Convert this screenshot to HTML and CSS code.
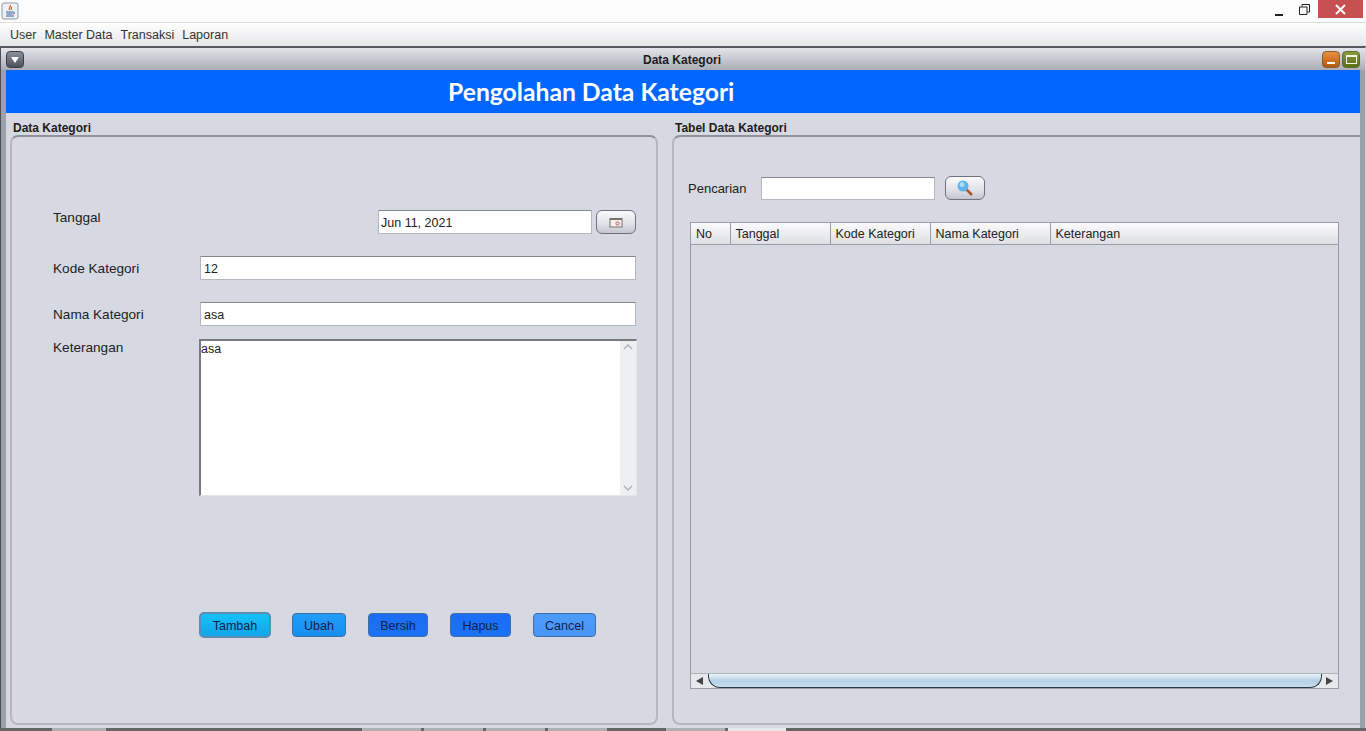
FILE: index.html
```html
<!DOCTYPE html>
<html>
<head>
  <title>Data Kategori</title>
  <meta charset="UTF-8">
  <link rel="stylesheet" href="styles.css">
</head>
<body>
  <!-- os window title -->
  <div class="os-title">
    <svg class="java-icon" width="18" height="18" viewBox="0 0 18 18">
      <rect x="1" y="1" width="16" height="16" rx="2" fill="#eef1f6" stroke="#8d97a6"/>
      <path d="M9 3c1.500 2-2 3-.5 5M10.500 5c.8 1.200-1 1.800-.2 3" fill="none" stroke="#d9541e" stroke-width="1.200"/>
      <path d="M5 10h7M5.500 12h6M5 14h8M12 10c2 0 2 2 0 2" fill="none" stroke="#2f5f96" stroke-width="1"/>
    </svg>
    <div class="os-controls">
      <svg class="os-min" width="10" height="10" viewBox="0 0 10 10"><rect x="1" y="7" width="8" height="2" fill="#222"/></svg>
      <svg class="os-restore" width="11" height="11" viewBox="0 0 11 11"><path d="M3 2.500V.5h7.500V8H8.500M.5 3h7.500v7.500H.5z" fill="none" stroke="#222"/></svg>
      <div class="os-close">
        <svg width="11" height="11" viewBox="0 0 11 11"><path d="M1 1l9 9M10 1l-9 9" stroke="#fff" stroke-width="2"/></svg>
      </div>
    </div>
  </div>

  <div class="menubar">
    <span class="menu-item">User</span>
    <span class="menu-item">Master Data</span>
    <span class="menu-item">Transaksi</span>
    <span class="menu-item">Laporan</span>
  </div>

  <!-- internal frame -->
  <div class="frame">
    <div class="frame-title">
      <div class="frame-btn btn-menu">
        <svg width="8" height="6" viewBox="0 0 8 6"><path d="M0 0h8L4 6z" fill="#fff"/></svg>
      </div>
      <div class="frame-name">Data Kategori</div>
      <div class="frame-btn btn-min"><span class="min-bar"></span></div>
      <div class="frame-btn btn-max"><span class="max-box"></span></div>
    </div>

    <div class="banner">Pengolahan Data Kategori</div>

    <div class="frame-body">
      <div class="group group-form">
        <div class="group-label">Data Kategori</div>
        <div class="group-box form-box">
          <div class="form-row row-date">
            <label class="lbl lbl-top">Tanggal</label>
            <div class="date-field">
              <input class="field date-input" type="text" value="Jun 11, 2021">
              <button class="gray-btn cal-btn">
                <svg width="14" height="11" viewBox="0 0 14 11">
                  <rect x="1" y="1.500" width="12" height="8.500" fill="#f4f1ea" stroke="#77706a"/>
                  <rect x="1" y="1" width="12" height="2" fill="#77706a"/>
                  <circle cx="8.500" cy="6.500" r="1.600" fill="none" stroke="#c0506a"/>
                </svg>
              </button>
            </div>
          </div>
          <div class="form-row row-kode">
            <label class="lbl">Kode Kategori</label>
            <input class="field" type="text" value="12">
          </div>
          <div class="form-row row-nama">
            <label class="lbl">Nama Kategori</label>
            <input class="field" type="text" value="asa">
          </div>
          <div class="form-row row-ket">
            <label class="lbl lbl-ket">Keterangan</label>
            <div class="area-wrap">
              <textarea class="area">asa</textarea>
              <div class="area-scroll">
                <svg width="10" height="6" viewBox="0 0 10 6"><path d="M1 5l4-4 4 4" fill="none" stroke="#b4b6bb" stroke-width="1.500"/></svg>
                <svg width="10" height="6" viewBox="0 0 10 6"><path d="M1 1l4 4 4-4" fill="none" stroke="#b4b6bb" stroke-width="1.500"/></svg>
              </div>
            </div>
          </div>
          <div class="actions">
            <button class="act act-tambah">Tambah</button>
            <button class="act act-ubah">Ubah</button>
            <button class="act act-bersih">Bersih</button>
            <button class="act act-hapus">Hapus</button>
            <button class="act act-cancel">Cancel</button>
          </div>
        </div>
      </div>

      <div class="group group-table">
        <div class="group-label">Tabel Data Kategori</div>
        <div class="group-box table-box">
          <div class="search-row">
            <label class="search-lbl">Pencarian</label>
            <input class="field search-input" type="text">
            <button class="gray-btn search-btn">
              <svg width="18" height="18" viewBox="0 0 18 18">
                <path d="M10 10l6 6" stroke="#a8562a" stroke-width="2.500"/>
                <circle cx="7" cy="7" r="5.500" fill="#5fb3ea"/>
                <circle cx="6" cy="5.500" r="2.500" fill="#a9dcf8"/>
              </svg>
            </button>
          </div>
          <div class="grid">
            <table class="grid-head">
              <tr>
                <th class="col-no">No</th>
                <th class="col-tgl">Tanggal</th>
                <th class="col-kode">Kode Kategori</th>
                <th class="col-nama">Nama Kategori</th>
                <th>Keterangan</th>
              </tr>
            </table>
            <div class="grid-body"></div>
            <div class="hscroll">
              <svg width="9" height="8" viewBox="0 0 9 8"><path d="M8 0v8L1 4z" fill="#444"/></svg>
              <div class="hthumb"></div>
              <svg width="9" height="8" viewBox="0 0 9 8"><path d="M1 0v8l7-4z" fill="#444"/></svg>
            </div>
          </div>
        </div>
      </div>
    </div>
  </div>

  <!-- edge of the taskbar that shows below the window -->
  <div class="strip">
    <span class="tab tab-a"></span>
    <span class="tab tab-b"></span>
    <span class="tab tab-c"></span>
    <span class="tab tab-c"></span>
    <span class="tab tab-c"></span>
    <span class="tab tab-d"></span>
    <span class="tab tab-e"></span>
  </div>
</body>
</html>
```

FILE: styles.css
```css
* {
  box-sizing: border-box;
}
html, body {
  margin: 0;
  height: 731px;
  overflow: hidden;
}
body {
  display: flex;
  flex-direction: column;
  font-family: "Liberation Sans", Arial, sans-serif;
  font-size: 12.5px;
  color: #222;
  background: #666;
}
.os-title {
  height: 23px;
  flex: none;
  display: flex;
  justify-content: space-between;
  background: #fcfcfc;
  border-bottom: 1px solid #dcdcdc;
}
.java-icon {
  margin: 2px 0 0 1px;
}
.os-controls {
  display: flex;
  align-items: flex-start;
}
.os-min {
  margin: 7px 15px 0 0;
}
.os-restore {
  margin: 4px 8px 0 0;
}
.os-close {
  width: 45px;
  height: 18px;
  margin-right: 3px;
  display: flex;
  align-items: center;
  justify-content: center;
  background: #c75050;
}
.menubar {
  height: 23px;
  flex: none;
  display: flex;
  align-items: center;
  padding: 1px 0 0 10px;
  background: linear-gradient(#ffffff, #e5e6e9);
  color: #333;
}
.menu-item {
  margin-right: 8px;
}
.frame {
  flex: 1;
  min-height: 0;
  display: flex;
  flex-direction: column;
  padding: 0 5px;
  border-top: 2px solid #55585e;
  border-left: 1px solid #4c4f55;
  border-right: 1px solid #d0d2d8;
  background: #9da1aa;
}
.frame-title {
  height: 22px;
  flex: none;
  display: flex;
  align-items: center;
  margin: 0 -5px;
  padding: 1px 5px 0;
  background: linear-gradient(#e4e5ea, #a9adb6);
}
.frame-name {
  flex: 1;
  text-align: center;
  font-size: 12px;
  font-weight: bold;
  color: #1c1c1c;
  padding-left: 18px;
}
.frame-btn {
  width: 18px;
  height: 17px;
  display: flex;
  align-items: center;
  justify-content: center;
  border-radius: 4px;
  border: 1px solid #3c3f46;
}
.btn-menu {
  background: linear-gradient(#8c909a, #4d515b);
}
.btn-min {
  background: linear-gradient(#e89040, #b45a10);
  border-color: #8a5a30;
  margin-right: 2px;
  align-items: flex-end;
  padding-bottom: 3px;
}
.min-bar {
  width: 8px;
  height: 2px;
  background: #fff;
}
.btn-max {
  background: linear-gradient(#8a9a3a, #5a7010);
  border-color: #5a6a30;
}
.max-box {
  width: 11px;
  height: 9px;
  border: 1px solid #f4f4e0;
  border-top-width: 2px;
}
.banner {
  height: 43px;
  flex: none;
  padding-left: 442px;
  font-family: Lato, sans-serif;
  font-size: 24.7px;
  font-weight: 700;
  line-height: 43px;
  color: #fff;
  background: #0066ff;
}
.frame-body {
  flex: 1;
  min-height: 0;
  display: flex;
  gap: 14px;
  padding: 8px 0 3px 4px;
  background: #d6d9e2;
}
.group {
  display: flex;
  flex-direction: column;
}
.group-form {
  width: 648px;
}
.group-table {
  flex: 1;
}
.group-label {
  height: 14px;
  padding-left: 3px;
  font-size: 12px;
  font-weight: bold;
  line-height: 15px;
  color: #1c1c1c;
}
.group-box {
  flex: 1;
  border: 2px solid #b4b7c0;
  border-top-color: #8e919a;
  border-radius: 8px;
}
.group-table .group-box {
  border-right: none;
  border-radius: 8px 0 0 8px;
}
.form-box {
  padding: 73px 20px 0 41px;
}
.form-row {
  display: grid;
  grid-template-columns: 147px 1fr;
}
.lbl {
  font-size: 13.6px;
  align-self: center;
  color: #222;
}
.lbl-top {
  align-self: start;
  line-height: 15px;
}
.lbl-ket {
  align-self: start;
  margin-top: 1px;
}
.date-field {
  display: flex;
  justify-content: flex-end;
  gap: 4px;
}
.field {
  height: 24px;
  padding: 1px 3px 0;
  font-family: inherit;
  font-size: 12.5px;
  color: #222;
  background: #fff;
  border: 1px solid #b4b7bf;
  border-top-color: #85888f;
  border-radius: 0;
  outline: none;
  width: 100%;
}
.date-input {
  width: 214px;
  padding-left: 2px;
}
.gray-btn {
  width: 40px;
  height: 24px;
  padding: 0;
  display: flex;
  align-items: center;
  justify-content: center;
  background: linear-gradient(#fafafc, #dfe1e7 60%, #c3c6ce);
  border: 1px solid #70737b;
  border-radius: 6px;
}
.row-kode, .row-nama {
  margin-top: 22px;
}
.row-ket {
  margin-top: 13px;
  margin-right: -1px;
  grid-template-columns: 146px 1fr;
}
.area-wrap {
  height: 157px;
  display: flex;
  background: #fff;
  border: 1px solid #e4e6ea;
  border-top: 2px solid #77797f;
  border-left: 2px solid #77797f;
}
.area {
  flex: 1;
  padding: 1px 0 0 0;
  border: none;
  outline: none;
  resize: none;
  overflow: hidden;
  font-family: inherit;
  font-size: 12.5px;
  color: #222;
}
.area-scroll {
  width: 16px;
  display: flex;
  flex-direction: column;
  justify-content: space-between;
  align-items: center;
  padding: 3px 0 4px;
  background: #eeeff0;
}
.actions {
  display: flex;
  margin: 116px 0 0 146px;
}
.act {
  height: 24px;
  margin-top: 1px;
  padding: 1px 0 0;
  font-family: inherit;
  font-size: 12.5px;
  color: #10204a;
  border: 1px solid #3f6fa8;
  border-radius: 4px;
}
.act-tambah {
  width: 72px;
  height: 26px;
  margin-top: 0;
  margin-right: 21px;
  background: linear-gradient(#16c0f8, #12a6ea);
  border: 2px solid #5e8cb0;
  border-radius: 5px;
}
.act-ubah {
  width: 54px;
  margin-right: 22px;
  background: linear-gradient(#229cf8, #1690f0);
}
.act-bersih {
  width: 60px;
  margin-right: 22px;
  background: linear-gradient(#1c6cf0, #1a72fa);
}
.act-hapus {
  width: 61px;
  margin-right: 22px;
  background: linear-gradient(#1c6cf4, #1a72fc);
}
.act-cancel {
  width: 63px;
  background: linear-gradient(#4c9cfa, #4a94f8);
}
.table-box {
  padding: 39px 21px 0 16px;
}
.search-row {
  display: flex;
  align-items: center;
  height: 24px;
  margin-left: -2px;
}
.search-lbl {
  width: 73px;
  font-size: 13px;
}
.search-input {
  width: 174px;
  height: 23px;
  margin-right: 10px;
}
.search-btn {
  width: 40px;
}
.grid {
  height: 467px;
  margin-top: 22px;
  display: flex;
  flex-direction: column;
  border: 1px solid #9a9da5;
}
.grid-head {
  width: 100%;
  height: 22px;
  flex: none;
  border-collapse: collapse;
  table-layout: fixed;
  background: linear-gradient(#fbfbfc, #dcdee3);
}
.grid-head th {
  padding: 0 0 0 5px;
  font-size: 12.5px;
  font-weight: normal;
  text-align: left;
  color: #222;
  border-right: 1px solid #9a9da5;
  border-bottom: 1px solid #9a9da5;
}
.grid-head th:last-child {
  border-right: none;
}
.col-no {
  width: 39px;
}
.col-tgl, .col-kode {
  width: 100px;
}
.col-nama {
  width: 120px;
}
.grid-body {
  flex: 1;
}
.hscroll {
  height: 15px;
  flex: none;
  display: flex;
  align-items: center;
  justify-content: space-between;
  padding: 0 4px;
  background: #e6e8ec;
  border-top: 1px solid #b0b3ba;
}
.hthumb {
  width: 614px;
  height: 14px;
  margin-top: -1px;
  background: linear-gradient(#eef4f9, #b4d0e4 55%, #c8deee);
  border: 1px solid #2b3a48;
  border-top: none;
  border-radius: 0 0 12px 12px;
}
.strip {
  height: 3px;
  flex: none;
  display: flex;
  background: #666;
}
.tab {
  height: 3px;
  background: #aeb0b4;
}
.tab-a {
  width: 54px;
  margin-left: 52px;
}
.tab-b {
  width: 59px;
  margin: 0 3px 0 256px;
}
.tab-c {
  width: 59px;
  margin-right: 3px;
}
.tab-d {
  width: 59px;
  margin: 0 3px 0 56px;
}
.tab-e {
  width: 58px;
  background: #e8e8ea;
}
```
